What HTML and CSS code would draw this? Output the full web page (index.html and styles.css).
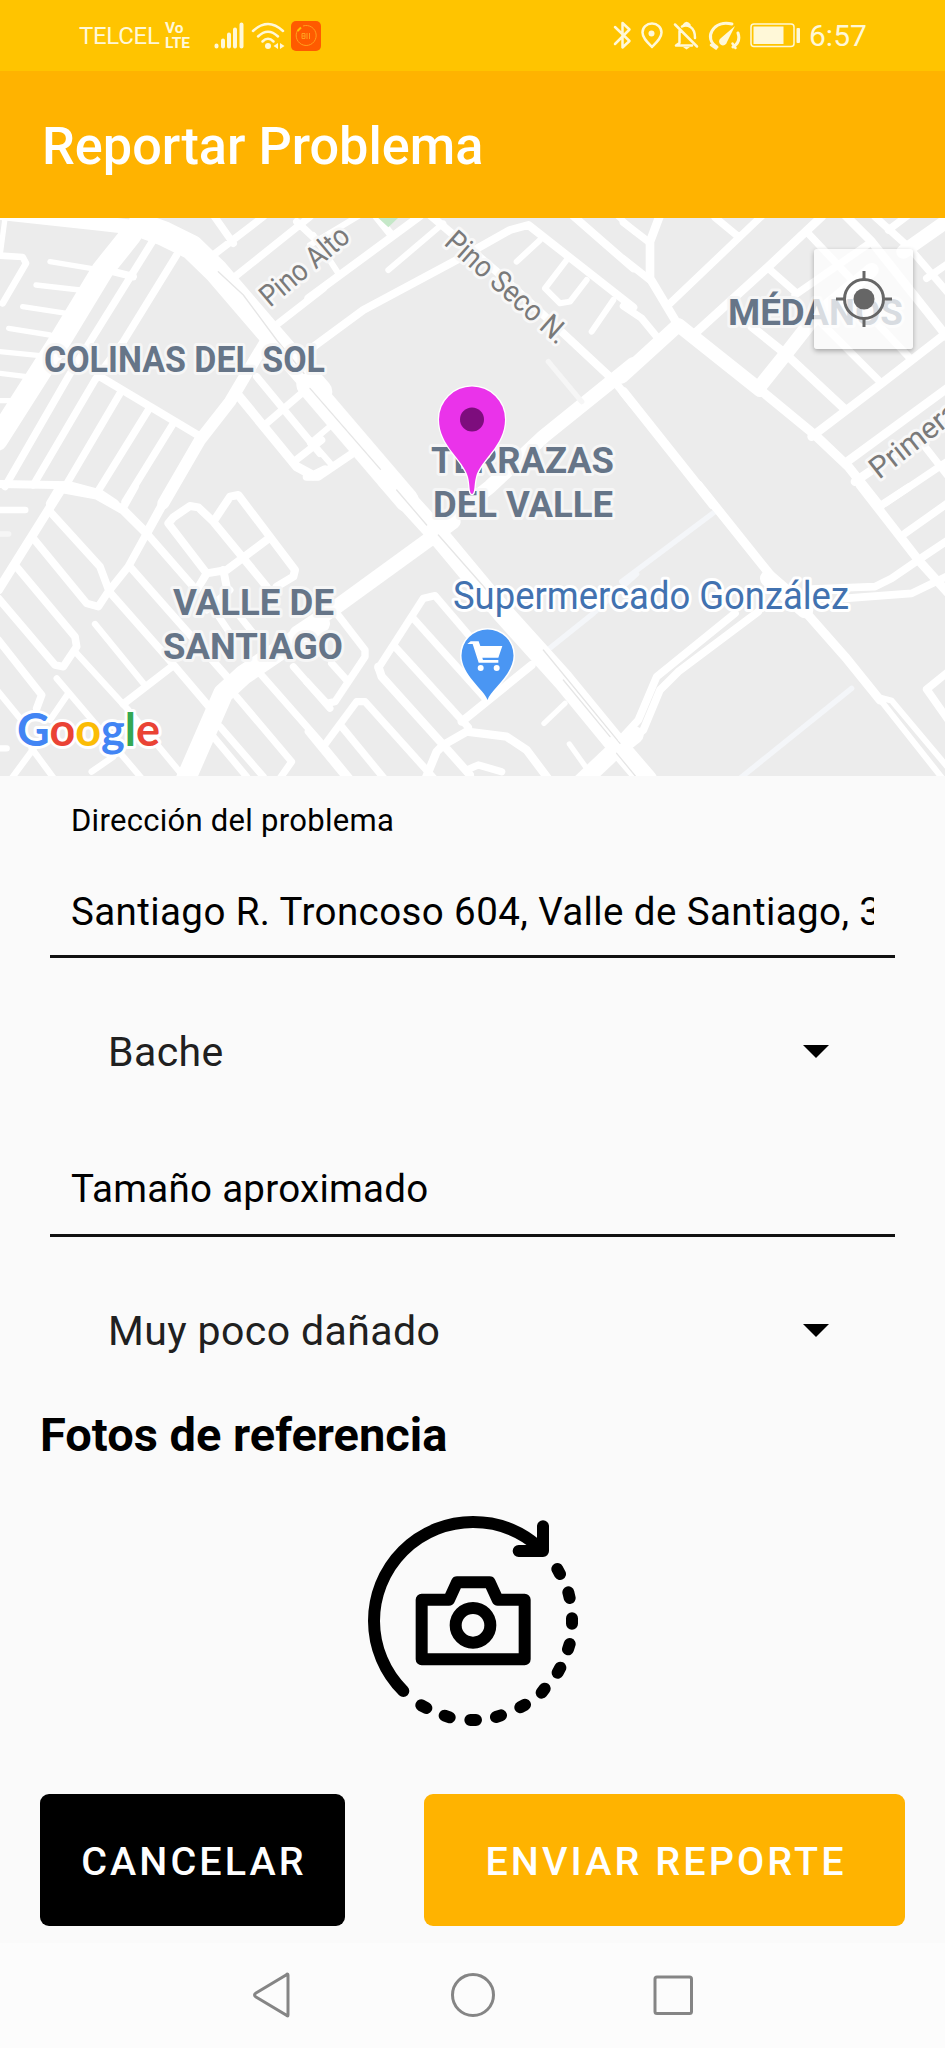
FILE: index.html
```html
<!DOCTYPE html>
<html lang="es">
<head>
<meta charset="utf-8">
<title>Reportar Problema</title>
<link rel="stylesheet" href="styles.css">
</head>
<body>
<header class="status">
  <div class="status-left">
    <span class="carrier">TELCEL</span>
    <span class="volte"><span>Vo</span><span>LTE</span></span>
    <svg class="signal" width="30" height="28" viewBox="0 0 30 28"><path d="M2.500 24.500v1M9 19.500v6M15 13.500v12M21 8.500v17M27.500 3.500v22"/></svg>
    <svg class="wifi" width="34" height="28" viewBox="0 0 34 28"><g class="line"><path d="M2 9Q17-5 32 9"/><path d="M7 14.500Q17 5 27 14.500"/><path d="M11.500 19.500Q17 14 22.500 19.500"/></g><circle cx="17" cy="24" r="3"/><path d="M27 21v6l-4.500-3zM29 21v6l4.500-3z"/></svg>
    <svg class="app" width="30" height="30" viewBox="0 0 30 30"><rect width="30" height="30" rx="5" fill="#ff5b00"/><path d="M12 5a10 10 0 1 1-5.500 4.500" fill="none" stroke="#ffa01e" stroke-width="1"/><path d="M6.500 10l3.500-3.500" stroke="#ffc400" stroke-width="2"/><path d="M11 12.500h3M11 15h3M11 17.500h3M11 12.500v5M14 12.500v5M16 12v6M18.500 12v6" fill="none" stroke="#ffa01e"/></svg>
  </div>
  <div class="status-right">
    <svg width="128" height="34" viewBox="0 0 128 34">
      <g class="line">
        <path d="M2 8l14.500 14-7 6.500V4l7 6.500L2 25"/>
        <path d="M39 4.500c-5.500 0-9.500 4-9.500 9 0 5.500 5 10 9.500 14.500 4.500-4.500 9.500-9 9.500-14.500 0-5-4-9-9.500-9z"/>
        <path d="M62 5.500l22 22M66.500 12v12l-3.500 2.500h16M69 7.500q4-2.500 8.500.5 4.500 3 4.500 11M71 6q2.500-4 5.500 0"/>
        <path d="M104 28c-7-4-8-11-5-16 4-7 12-9 20-7" stroke-width="3"/>
        <path d="M125 14c2 6 0 11-5 14" stroke-width="3"/>
        <path d="M98 26l5 3.500M119.500 24.500l3 4.500"/>
      </g>
      <circle cx="38.500" cy="14.500" r="3"/><path d="M70 28h7l-3.500 2.500z"/><path d="M108 19l14-12-8 16a4 4 0 1 1-6-4z"/>
    </svg>
    <svg class="battery" width="51" height="25" viewBox="0 0 51 25"><rect x="1" y="1" width="43" height="22.500" rx="3" class="line thin"/><rect x="3.500" y="3.500" width="30" height="17.500"/><rect x="46.500" y="5" width="3.500" height="15" rx="1"/></svg>
    <span class="clock">6:57</span>
  </div>
</header>
<div class="appbar"><h1>Reportar Problema</h1></div>

<section class="map">
<svg class="map-art" width="945" height="558" viewBox="0 218 945 558">
  <rect y="218" width="945" height="558" fill="#ececec"/>
  <!-- north-west -->
  <g class="roads" transform="translate(0 210) scale(.33333)">
    <path stroke-width="44" d="M-20 6L300 40 470 60"/><path stroke-width="66" d="M392 75L308 180 178 395-10 690"/>
    <path stroke-width="74" d="M420 45L490 70 575 112 650 185 800 360 960 545"/>
    <path stroke-width="16" d="M150 155L290 178M108 225L240 240M68 290L200 310M26 355L150 375M0 425L120 437M0 490L80 500M-10 572H30M0 138L15 25"/>
    <path stroke-width="20" d="M0 137L68 141 78 160 8 280"/>
    <path stroke-width="22" d="M460 90L205 500 15 830M530 135L370 395 285 510 100 825M340 185L400 200M360 550L200 822M445 600L290 850M520 640L375 875"/>
    <path stroke-width="24" d="M300 500L605 682"/><path stroke-width="36" d="M800 390L740 490 690 575 600 690 490 880"/>
    <path stroke-width="22" d="M640 15L700 100M640 135L790 20M705 200L930 20M890 35L970 110M835 340L970 235M770 500L960 730M800 640L905 550M878 758L965 690"/>
    <path stroke-width="28" d="M710 550L890 770 940 797 975 780"/><path stroke-width="24" d="M0 822L210 826 300 850 345 880M180 830L150 880"/>
    <path class="seam" d="M655 185L730 255 830 390 965 555"/>
  </g>
  <!-- north -->
  <g class="roads" transform="translate(310 210) scale(.33333)">
    <path stroke-width="24" d="M-5 265L330 18M200 20L240 70M360 15L560 185 760 370 910 510 970 585M-10 425L160 300 440 150 600 60 655 45 970 292M790 18L970 175"/>
    <path class="park" d="M205 24H264L235 52z"/>
    <path stroke-width="18" d="M235 180L400 40M0 105L150 15M10 75L85 190M690 90L620 155M770 150L705 235 750 280 780 275 830 210M910 270L845 365M920 15L975 65M0 700L65 645 135 720M0 690L70 770"/>
    <path stroke-width="24" d="M-10 800L25 800 140 722"/>
    <path stroke-width="42" d="M970 462L700 680 540 830 400 940"/><path class="faint" d="M715 455L815 575"/>
    <path stroke-width="72" d="M-5 525L290 870"/><path class="seam" d="M0 535L300 880"/>
  </g>
  <!-- north-east -->
  <g class="roads" transform="translate(625 210) scale(.33333)">
    <path stroke-width="22" d="M-5 37L70 95M-5 147L75 210M-5 288L50 325 95 380M130 285L410 18M270 22L340 80M430 175L510 245M510 255L740 95M545 65L700 230M750 20L850 110 970 250M790 60L850 15M905 205L970 160M590 340L770 520M700 280L855 445M900 710L970 800M780 880L970 752"/>
    <path stroke-width="26" d="M105 15L75 95V205L150 330M215 365L430 170 590 20M660 15L740 95 970 385M380 350L480 430 660 598M560 680L770 520 970 365M670 752L970 532M690 815L800 740 960 620"/>
    <path stroke-width="42" d="M-10 500L160 345 405 540M400 535L480 435 570 320 740 180M835 125L970 30"/>
    <path stroke-width="28" d="M400 535L570 675 670 770 765 890M-5 545L150 740 265 885"/>
  </g>
  <!-- south-west -->
  <g class="roads" transform="translate(0 490) scale(.33333)">
    <path stroke-width="27" d="M190-12L-5 300M180-5L290 15 370 60 440 130M520-15L440 130"/>
    <path stroke-width="23" d="M370 52L405-10M440 130L580 290M440 130L385 230 325 305M150 65L300 230 328 305 500 500 640 665M100 145L260 340 295 350 328 300M45 225L225 440 230 470 190 530 165 525-5 325M-5 450L125 615 110 655M390 230L700 582M515 530L370 642"/>
    <path stroke-width="19" d="M285 402L430 580M230 490L385 660 555 865M170 565L425 865M205 610L150 690M275 845L340 800M0 60H76M-5 605L60 685M105 770L35 865M95 775L165 870M-5 775H20"/>
    <path class="faint" d="M0 132H26"/>
    <path stroke-width="60" d="M552 880L670 610 730 555 960 400"/>
    <path stroke-width="21" d="M640 740L740 860M660 710L790 860M710 620L875 815 840 865M780 550L960 755 1050 865M880 530L990 655M650 370L690 430M720 380L760 430M620 360L690 300"/>
    <path stroke-width="24" d="M620 250L505 100 520 82 570 48 595 52 640 95 690 20 715 15 885 240 880 260 830 290M640 95L800 290M590 300L620 250 680 240 800 150M670 240L680 290"/>
  </g>
  <!-- south -->
  <g class="roads" transform="translate(310 490) scale(.33333)">
    <path stroke-width="44" d="M-40 430L80 350 380 132 430 95"/>
    <path class="faint cool" d="M700 490L850 370 980 252"/>
    <path stroke-width="22" d="M80 370L165 480V500L75 635 50 640-10 575M65 520L110 570M-5 725L110 865M40 770L140 635 165 635 372 865M95 710L222 865M205 535L340 325 375 317 480 440M310 385L530 630M255 470L475 712M470 840L505 825 575 845"/>
    <path stroke-width="25" d="M205 530L215 560 400 765 480 855M455 695L665 525M345 870L380 785 400 765 470 725 590 740 650 780 725 880"/>
    <path stroke-width="16" d="M765 640L702 700M778 762L830 835"/>
    <path stroke-width="64" d="M230-35L380 130 580 370 760 570 920 765 1010 870"/>
    <path stroke-width="52" d="M810 880L905 790 975 735"/>
    <path class="seam" d="M260 0L350 105M385 135L530 300M700 480L930 760M760 570L900 740M920 790L990 875"/>
  </g>
  <!-- south-east -->
  <g class="roads" transform="translate(625 490) scale(.33333)">
    <path class="faint cool" d="M-10 275L270 65M345 865L680 595"/>
    <path stroke-width="27" d="M220-15L440 260M545 370L660 500 765 630M705-15L880 210 970 310"/>
    <path stroke-width="50" d="M430 265L540 360"/>
    <path stroke-width="23" d="M-10 745L40 690 95 560 330 370M-5 770L55 720 105 600 160 545 400 365M560 297L750 290 800 265 880 210 970 150M660 325L860 310 970 257M770 45L850-8M840 130L970 38M970 545L905 598 970 690"/>
    <path stroke-width="18" d="M755 620L800 632 975 840M770 635L960 875"/>
  </g>

  <g class="place">
    <text x="44" y="372" textLength="281" lengthAdjust="spacingAndGlyphs">COLINAS DEL SOL</text>
    <text x="431" y="473" textLength="183" lengthAdjust="spacingAndGlyphs">TERRAZAS</text>
    <text x="433" y="517" textLength="180" lengthAdjust="spacingAndGlyphs">DEL VALLE</text>
    <text x="728" y="325" textLength="175" lengthAdjust="spacingAndGlyphs">MÉDANOS</text>
    <text x="173" y="615" textLength="161" lengthAdjust="spacingAndGlyphs">VALLE DE</text>
    <text x="163" y="659" textLength="180" lengthAdjust="spacingAndGlyphs">SANTIAGO</text>
  </g>
  <g class="street">
    <text transform="translate(270 308) rotate(-40)" textLength="107" lengthAdjust="spacingAndGlyphs">Pino Alto</text>
    <text transform="translate(443 244) rotate(41.500)" textLength="153" lengthAdjust="spacingAndGlyphs">Pino Seco N.</text>
    <text transform="translate(879 480) rotate(-38)">Primera</text>
  </g>
  <text class="poi" x="453" y="609" textLength="396" lengthAdjust="spacingAndGlyphs">Supermercado González</text>

  <path d="M487.500 700c-3-10-26-25-26-44.500a26 26 0 0 1 52 0c0 19.500-23 34.500-26 44.500z" fill="#4a96f3" stroke="#fff" stroke-width="3" paint-order="stroke"/>
  <g fill="#fff" transform="translate(310 490) scale(.33333)"><path d="M482 454h24l5 14h66l-12 35h-48l2 7h46v8h-59l-18-56h-16z"/><circle cx="512" cy="534" r="9"/><circle cx="560" cy="534" r="9"/></g>

  <path d="M472 494c-3 0-2-10-4-17-4-17-29-31-29-57.500a33 33 0 0 1 66 0c0 26.500-25 40.500-29 57.500-2 7-1 17-4 17z" fill="#ea33ea" stroke="#fff" stroke-width="2.500" paint-order="stroke"/>
  <circle cx="472" cy="419.500" r="12" fill="#7d0d7d"/>

  <text class="google" x="17" y="746" textLength="143" lengthAdjust="spacingAndGlyphs"><tspan fill="#4285f4">G</tspan><tspan fill="#ea4335">o</tspan><tspan fill="#fbbc05">o</tspan><tspan fill="#4285f4">g</tspan><tspan fill="#34a853">l</tspan><tspan fill="#ea4335">e</tspan></text>
</svg>
<button class="locate" aria-label="Mi ubicación"><svg width="58" height="58" viewBox="0 0 58 58"><circle cx="29" cy="29" r="19.500" fill="none" stroke="#666" stroke-width="3"/><circle cx="29" cy="29" r="10.500" fill="#666"/><path d="M29 1v9M29 48v9M1 29h9M48 29h9" stroke="#666" stroke-width="3"/></svg></button>
</section>

<main class="form">
  <label class="caption">Dirección del problema</label>
  <div class="field first"><span>Santiago R. Troncoso 604, Valle de Santiago, 3</span></div>
  <div class="spinner"><span>Bache</span><i class="caret"></i></div>
  <div class="field"><span class="size">Tamaño aproximado</span></div>
  <div class="spinner"><span class="damage">Muy poco dañado</span><i class="caret"></i></div>
  <h2>Fotos de referencia</h2>
  <div class="photo">
    <svg width="212" height="212" viewBox="79 76 636 636">
      <g fill="none" stroke="#000" stroke-width="36" stroke-linecap="round" stroke-linejoin="round">
        <path d="M188 604A297 297 0 0 1 100 394A297 297 0 0 1 397 97A297 297 0 0 1 592 170"/><path d="M607 110V184H534"/>
        <path d="M243 330H325L349 278H447L471 330H552V509H243z"/><circle cx="397" cy="407" r="52"/>
        <path d="M650 238l8 15M683 308l4 17M694 386v16M687 463l-5 16M659 534l-8 15M612 597l-9 12M553 645l-14 8M481 677l-15 5M406 691h-17M327 683l-15-5M257 655l-15-8"/>
      </g>
    </svg>
  </div>
  <div class="actions"><button class="cancel">CANCELAR</button><button class="send">ENVIAR REPORTE</button></div>
</main>
<nav class="navbar">
  <svg width="46" height="50" viewBox="0 0 46 50"><path d="M38 5V45Q38 47 36 45L6 27Q3 25 6 23L36 5Q38 3 38 5z"/></svg>
  <svg width="46" height="50" viewBox="0 0 46 50"><circle cx="23" cy="25" r="20.500"/></svg>
  <svg width="46" height="50" viewBox="0 0 46 50"><rect x="5" y="7" width="36.500" height="36.500" rx="2"/></svg>
</nav>
</body>
</html>
```

FILE: styles.css
```css
* { box-sizing: border-box; }
body { margin: 0; width: 945px; height: 2048px; overflow: hidden; background: #fafafa; font-family: Roboto, "Liberation Sans", sans-serif; color: #000; display: flex; flex-direction: column; }
svg { display: block; flex: none; }
button { font: inherit; border: 0; padding: 0; }

.status { height: 71px; background: #ffc400; color: #fff8d8; display: flex; justify-content: space-between; padding: 0 78px 0 79px; }
.status-left, .status-right { display: flex; align-items: center; }
.status svg { fill: #fff8d8; }
.carrier { font-size: 24px; line-height: 28px; width: 86px; letter-spacing: -.3px; }
.volte { display: flex; flex-direction: column; font-size: 15.5px; line-height: 15px; font-weight: 700; width: 49px; }
.signal { stroke: #fff8d8; stroke-width: 4; stroke-linecap: round; margin-bottom: 1px; }
.wifi { margin-left: 7px; }
.app { margin-left: 6px; margin-top: 1px; }
.line { fill: none; stroke: #fff8d8; stroke-width: 2.5; stroke-linecap: round; stroke-linejoin: round; }
.status .thin { stroke-width: 1.5; fill: none; }
.battery { margin-left: 9px; }
.clock { font-size: 30px; margin-left: 8px; width: 58px; }

.appbar { height: 147px; background: #ffb300; padding: 0 42px; display: flex; align-items: center; }
h1 { margin: 4px 0 0; color: #fff; font-size: 52.2px; line-height: 62px; font-weight: 500; white-space: nowrap; }

.map { position: relative; height: 558px; flex: none; overflow: hidden; }
.roads { fill: none; stroke: #fff; stroke-linejoin: round; stroke-linecap: round; }
.roads .seam { stroke: #e6e6e6; stroke-width: 4; }
.roads .faint { stroke: #f6f6f6; stroke-width: 16; }
.roads .cool { stroke: #f4f6f9; }
.roads .park { fill: #c5e8c8; stroke: none; }
.map text { paint-order: stroke; stroke: #fff; stroke-width: 6px; stroke-linejoin: round; }
.map .place text { font-size: 37px; font-weight: 700; fill: #667588; stroke: #f6f6f6; }
.map .street text { font-size: 30px; fill: #7a7a7a; stroke: #f8f8f8; }
.map .poi { font-size: 38px; fill: #4272b0; }
.map .google { font-family: Lato, Roboto, sans-serif; font-size: 46px; font-weight: 700; }
.locate { position: absolute; left: 814px; top: 31px; width: 99px; height: 100px; background: rgba(255,255,255,.75); border-radius: 3px; box-shadow: 0 2px 5px rgba(0,0,0,.3); display: flex; align-items: center; justify-content: center; }

.form { height: 1167px; flex: none; display: flex; flex-direction: column; }
.caption { padding: 27px 71px 0; font-size: 31px; line-height: 36px; height: 75px; letter-spacing: .28px; }
.field { margin: 0 50px; padding: 0 21px; height: 109px; border-bottom: 3px solid #111; display: flex; align-items: center; font-size: 38.5px; }
.first { height: 107px; padding-top: 16px; letter-spacing: .4px; }
.field span { overflow: hidden; white-space: nowrap; width: 803px; padding-top: 15px; }
.field .size { letter-spacing: .27px; }
.first span { padding-top: 0; }
.spinner { height: 170px; padding: 17px 116px 0 108px; display: flex; align-items: center; justify-content: space-between; font-size: 41px; color: #202020; letter-spacing: .4px; }
.caret { border: 13px solid transparent; border-top-color: #000; border-bottom: 0; }
h2 { margin: 0 40px; font-size: 47px; line-height: 56px; font-weight: 700; }
.photo { display: flex; justify-content: center; padding-top: 52px; height: 331px; }
.actions { display: flex; justify-content: space-between; padding: 0 40px; height: 132px; }
.actions button { height: 132px; border-radius: 9px; color: #fff; font-size: 39.5px; font-weight: 500; letter-spacing: 3.1px; padding: 2px 0 0 3px; white-space: nowrap; }
.cancel { width: 305px; background: #000; }
.send { width: 481px; background: #ffb300; }

.navbar { height: 105px; flex: none; background: #fcfcfc; display: flex; justify-content: center; gap: 154px; padding-top: 27px; }
.navbar svg { fill: none; stroke: #858585; stroke-width: 3; }
```
